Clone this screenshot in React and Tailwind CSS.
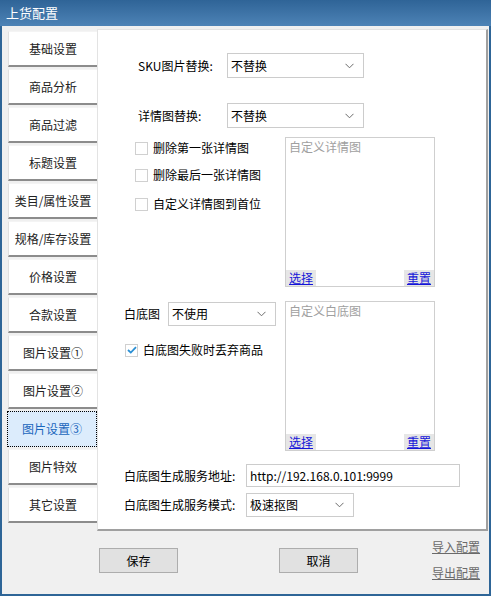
import { useState } from "react"

const tabs = [
  "基础设置",
  "商品分析",
  "商品过滤",
  "标题设置",
  "类目/属性设置",
  "规格/库存设置",
  "价格设置",
  "合款设置",
  "图片设置①",
  "图片设置②",
  "图片设置③",
  "图片特效",
  "其它设置",
]

const font = { fontFamily: '"Microsoft YaHei", "Noto Sans CJK SC", "Noto Sans", sans-serif' }

function Chevron() {
  return (
    <svg width="9" height="6" viewBox="0 0 9 6" className="shrink-0">
      <path d="M0.5 0.8 L4.5 4.8 L8.5 0.8" fill="none" stroke="#6b6b6b" strokeWidth="1" />
    </svg>
  )
}

function Select({ value, className }) {
  return (
    <div className={"flex items-center justify-between border border-[#cccccc] bg-white pl-[3px] pr-[9px] text-[12px] text-black " + className}>
      <span>{value}</span>
      <Chevron />
    </div>
  )
}

function Check({ checked, label, className = "" }) {
  return (
    <label className={"flex items-center gap-[5px] text-[12px] text-black " + className}>
      <span className="flex h-[13px] w-[13px] items-center justify-center border border-[#d0d0d0] bg-white">
        {checked && (
          <svg width="10" height="8" viewBox="0 0 10 8">
            <path d="M1 4 L3.8 6.6 L9 1.2" fill="none" stroke="#2a8fd4" strokeWidth="1.8" />
          </svg>
        )}
      </span>
      {label}
    </label>
  )
}

// picture box with the select / reset links along its foot
function PictureBox({ hint }) {
  return (
    <div className="flex h-[150px] w-[150px] flex-col justify-between border border-[#cfcfcf] bg-white">
      <span className="px-[3px] pt-[1px] text-[12px] leading-[16px] text-[#a0a0a0]">{hint}</span>
      <div className="flex justify-between">
        <a className="bg-[#e6e6e6] px-[3px] text-[12px] leading-[16px] text-[#1616d8] underline">选择</a>
        <a className="bg-[#e6e6e6] px-[3px] text-[12px] leading-[16px] text-[#1616d8] underline">重置</a>
      </div>
    </div>
  )
}

export default function App() {
  const [active, setActive] = useState(10)

  return (
    <div className="flex h-[596px] w-[491px] flex-col bg-[#2e6597]" style={font}>
      {/* title bar */}
      <div className="flex h-[26px] items-center bg-gradient-to-b from-[#2f6497] to-[#4d83b6] pl-[6px] text-[13px] text-white">
        上货配置
      </div>

      <div className="mx-[2px] mb-[2px] flex flex-1 flex-col bg-[#f0f0f0]">
        <div className="flex pt-[3px]">
          {/* tab strip */}
          <div className="ml-[5px] flex w-[90px] flex-col pt-[2px]">
            {tabs.map((t, i) =>
              i === active ? (
                <div
                  key={t}
                  className="mb-[2px] flex h-[36px] items-center justify-center border border-dotted border-black bg-[#dcecfc] text-[12px] text-[#1a66bd]"
                >
                  {t}
                </div>
              ) : (
                <div
                  key={t}
                  onClick={() => setActive(i)}
                  className="mb-[2px] ml-[1px] flex h-[36px] items-center justify-center border-b-2 border-l border-t border-b-[#8c8c8c] border-l-[#e0e0e0] border-t-[#f4f4f4] bg-white text-[12px] text-[#222]"
                >
                  {t}
                </div>
              )
            )}
          </div>

          {/* settings panel */}
          <div className="flex h-[502px] w-[391px] flex-col border-b-2 border-l border-r-2 border-t border-b-[#a0a0a0] border-l-[#e3e3e3] border-r-[#a0a0a0] border-t-[#e3e3e3] bg-white text-[12px] text-black">
            <div className="mt-[23px] flex items-center">
              <span className="ml-[40px] w-[89px]">SKU图片替换:</span>
              <Select value="不替换" className="h-[25px] w-[137px]" />
            </div>
            <div className="mt-[25px] flex items-center">
              <span className="ml-[40px] w-[89px]">详情图替换:</span>
              <Select value="不替换" className="h-[25px] w-[137px]" />
            </div>

            <div className="mt-[9px] flex">
              <div className="ml-[37px] flex w-[150px] flex-col pt-[4px]">
                <Check label="删除第一张详情图" className="h-[14px]" />
                <Check label="删除最后一张详情图" className="mt-[13px] h-[14px]" />
                <Check label="自定义详情图到首位" className="mt-[15px] h-[14px]" />
              </div>
              <PictureBox hint="自定义详情图" />
            </div>

            <div className="mt-[14px] flex">
              <div className="ml-[26px] flex w-[161px] flex-col pt-[1px]">
                <div className="flex items-center">
                  <span className="w-[44px]">白底图</span>
                  <Select value="不使用" className="h-[24px] w-[108px]" />
                </div>
                <Check checked label="白底图失败时丢弃商品" className="ml-[1px] mt-[17px] h-[14px]" />
              </div>
              <PictureBox hint="自定义白底图" />
            </div>

            <div className="mt-[13px] flex items-center">
              <span className="ml-[26px] w-[122px]">白底图生成服务地址:</span>
              <div className="flex h-[23px] w-[214px] items-center border border-[#cccccc] pl-[3px]">
                http://192.168.0.101:9999
              </div>
            </div>
            <div className="mt-[6px] flex items-center">
              <span className="ml-[26px] w-[122px]">白底图生成服务模式:</span>
              <Select value="极速抠图" className="h-[24px] w-[108px]" />
            </div>
          </div>
        </div>

        {/* footer buttons */}
        <div className="flex flex-1 items-start">
          <button className="ml-[97px] mt-[17px] h-[25px] w-[79px] border border-[#adadad] bg-[#e1e1e1] text-[12px] text-black">
            保存
          </button>
          <button className="ml-[101px] mt-[17px] h-[25px] w-[79px] border border-[#adadad] bg-[#e1e1e1] text-[12px] text-black">
            取消
          </button>
          <div className="ml-[74px] mt-[8px] flex flex-col gap-[10px] text-[12px] leading-[16px] text-[#6a6a6a]">
            <a className="underline">导入配置</a>
            <a className="underline">导出配置</a>
          </div>
        </div>
      </div>
    </div>
  )
}
